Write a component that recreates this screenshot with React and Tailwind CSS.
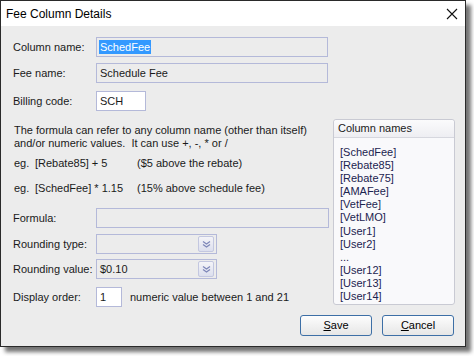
import { useState } from "react";

const FONT = { fontFamily: '"Liberation Sans", Arial, sans-serif' };

const COLUMNS = [
  "[SchedFee]",
  "[Rebate85]",
  "[Rebate75]",
  "[AMAFee]",
  "[VetFee]",
  "[VetLMO]",
  "[User1]",
  "[User2]",
  "...",
  "[User12]",
  "[User13]",
  "[User14]",
];

function Chevrons() {
  return (
    <svg width="9" height="8" viewBox="0 0 9 8" className="block">
      <path d="M1 1.5 L4.5 4 L8 1.5" fill="none" stroke="#7d86b8" strokeWidth="1.3" />
      <path d="M1 4.5 L4.5 7 L8 4.5" fill="none" stroke="#7d86b8" strokeWidth="1.3" />
    </svg>
  );
}

function Select({ value }) {
  return (
    <div className="w-[121px] h-[20px] border border-[#b4b9d9] bg-[#ececec] flex items-center justify-between pl-[3px] pr-[2px]">
      <span>{value}</span>
      <span className="w-[16px] h-[16px] rounded-[2px] border border-[#c3c7e0] bg-gradient-to-b from-[#f4f4f8] to-[#dcdfee] flex items-center justify-center">
        <Chevrons />
      </span>
    </div>
  );
}

export default function App() {
  const [order, setOrder] = useState("1");
  const [code, setCode] = useState("SCH");

  return (
    <div className="w-[474px] h-[356px] bg-white text-[11px] text-[#1a1a1a]" style={FONT}>
      <div className="w-[466px] h-[347px] border border-[#2a2a2a] flex flex-col shadow-[5px_5px_4px_rgba(0,0,0,0.55)]">
        {/* title bar */}
        <div className="h-[25px] bg-white flex items-center justify-between pl-[5px] pr-[7px] shrink-0">
          <span className="text-[12px] text-black">Fee Column Details</span>
          <svg width="12" height="12" viewBox="0 0 12 12">
            <path d="M1 1 L11 11 M11 1 L1 11" stroke="#111" strokeWidth="1.1" />
          </svg>
        </div>

        {/* body */}
        <div className="flex-1 bg-[#ececec] pl-[12px] pr-[10px] pt-[11px] flex flex-col">
          <div className="grid grid-cols-[83px_1fr] items-center gap-y-[6px] w-[315px]">
            <span>Column name:</span>
            <div className="h-[20px] border border-[#b4b9d9] bg-[#ececec] flex items-center pl-[2px]">
              <span className="bg-[#3399ff] text-white px-[1px] leading-[14px]">SchedFee</span>
            </div>
            <span>Fee name:</span>
            <div className="h-[20px] border border-[#b4b9d9] bg-[#ececec] flex items-center pl-[3px]">
              Schedule Fee
            </div>
            <span className="mt-[2px]">Billing code:</span>
            <input
              value={code}
              onChange={(e) => setCode(e.target.value)}
              className="mt-[2px] w-[50px] h-[20px] border border-[#b4b9d9] bg-white px-[3px] outline-none"
            />
          </div>

          <div className="flex mt-[8px]">
            {/* left column */}
            <div className="w-[316px] flex flex-col">
              <p className="mt-[5px] pl-[1px] leading-[13px]">
                The formula can refer to any column name (other than itself)
                <br />
                and/or numeric values.&nbsp; It can use +, -, * or /
              </p>
              <div className="mt-[6px] h-[14px] flex items-center pl-[1px] whitespace-nowrap">
                <span className="w-[21px] shrink-0">eg.</span>
                <span className="w-[102px] shrink-0">[Rebate85] + 5</span>
                <span>($5 above the rebate)</span>
              </div>
              <div className="mt-[11px] h-[14px] flex items-center pl-[1px] whitespace-nowrap">
                <span className="w-[21px] shrink-0">eg.</span>
                <span className="w-[102px] shrink-0">[SchedFee] * 1.15</span>
                <span>(15% above schedule fee)</span>
              </div>

              <div className="mt-[13px] grid grid-cols-[83px_1fr] items-center">
                <span>Formula:</span>
                <div className="h-[20px] border border-[#b4b9d9] bg-[#ececec]" />
                <span className="mt-[6px]">Rounding type:</span>
                <div className="mt-[6px]">
                  <Select value="" />
                </div>
                <span className="mt-[5px]">Rounding value:</span>
                <div className="mt-[5px]">
                  <Select value="$0.10" />
                </div>
                <span className="mt-[8px]">Display order:</span>
                <div className="mt-[8px] flex items-center gap-[8px]">
                  <input
                    value={order}
                    onChange={(e) => setOrder(e.target.value)}
                    className="w-[26px] h-[20px] border border-[#b4b9d9] bg-white px-[3px] outline-none"
                  />
                  <span>numeric value between 1 and 21</span>
                </div>
              </div>
            </div>

            {/* column names panel */}
            <div className="ml-[4px] w-[122px] h-[186px] border border-[#c9cad3] rounded-[3px] bg-[#f9f9fb] flex flex-col">
              <div className="h-[18px] px-[4px] flex items-center border-b border-[#d6d7de] bg-gradient-to-b from-[#fbfbfc] to-[#eeeef2] rounded-t-[3px]">
                Column names
              </div>
              <ul className="pt-[8px] pl-[6px] leading-[13.1px] text-[#1c2450]">
                {COLUMNS.map((c, i) => (
                  <li key={i}>{c}</li>
                ))}
              </ul>
            </div>
          </div>

          <div className="flex justify-end gap-[10px] mt-[8px] pr-[1px]">
            <button className="w-[72px] h-[21px] rounded-[3px] border border-[#3d6fa6] bg-gradient-to-b from-[#fdfdfd] to-[#e6e6e6] text-black">
              <span className="underline">S</span>ave
            </button>
            <button className="w-[72px] h-[21px] rounded-[3px] border border-[#3d6fa6] bg-gradient-to-b from-[#fdfdfd] to-[#e6e6e6] text-black">
              <span className="underline">C</span>ancel
            </button>
          </div>
        </div>
      </div>
    </div>
  );
}
